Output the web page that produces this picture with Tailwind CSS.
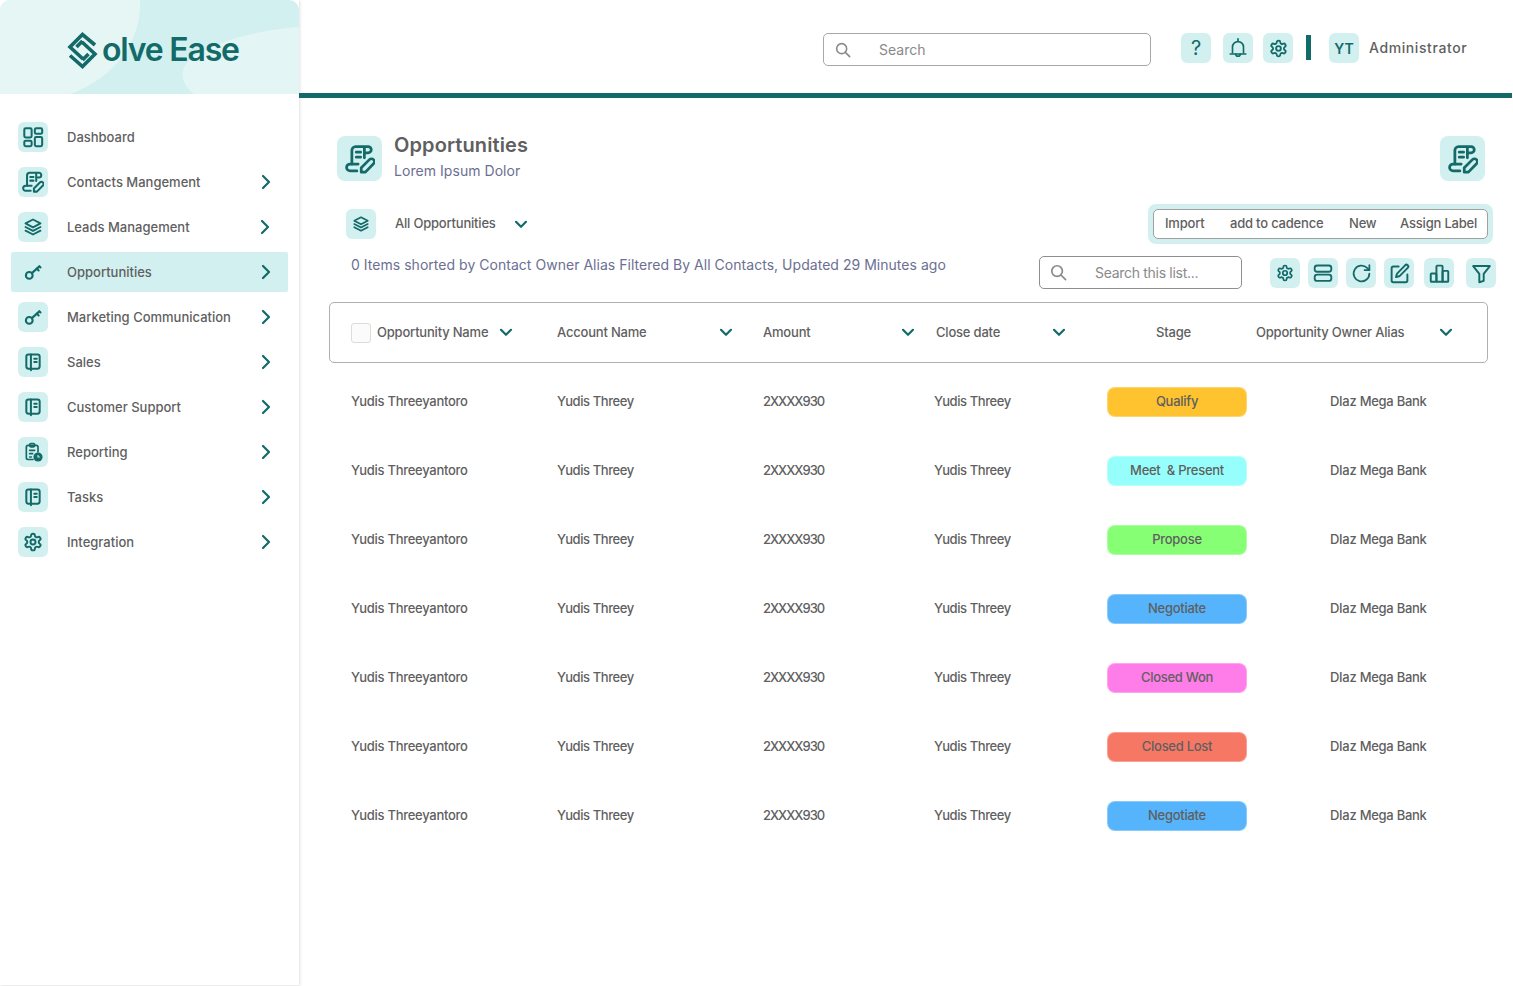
<!doctype html>
<html lang="en">
<head>
<meta charset="utf-8">
<title>Solve Ease - Opportunities</title>
<script src="https://cdn.jsdelivr.net/npm/@tailwindcss/browser@4"></script>
</head>
<body class="bg-white font-['Inter',sans-serif] text-[#5f5f5f] overflow-hidden">
<svg class="hidden" aria-hidden="true">
  <defs>
    <symbol id="i-grid" viewBox="0 0 24 24"><g fill="none" stroke="currentColor" stroke-width="2.200"><rect x="2.500" y="2.500" width="8" height="10" rx="1.500"/><rect x="14" y="2.500" width="8" height="6" rx="1.500"/><rect x="14" y="12" width="8" height="10" rx="1.500"/><rect x="2.500" y="16" width="8" height="6" rx="1.500"/></g></symbol>
    <symbol id="i-scroll" viewBox="0 0 24 24"><g fill="none" stroke="currentColor" stroke-width="2.200" stroke-linecap="round" stroke-linejoin="round"><path d="M5.500 16V5a3 3 0 0 1 3-3h10a2.400 2.400 0 0 1 0 5H16"/><path d="M15.500 3v8"/><path d="M9 6.500h3.500M9 10.500h3.500"/><path d="M9.500 21.500H4a2.700 2.700 0 0 1 0-5.500h6.500"/><path d="M13 22.500v-3.500l6.500-6.500a2.300 2.300 0 0 1 3.300 3.300l-6.500 6.700z"/></g></symbol>
    <symbol id="i-layers" viewBox="0 0 24 24"><g fill="none" stroke="currentColor" stroke-width="2.200" stroke-linejoin="round" stroke-linecap="round"><path d="M12 3l9 4.700-9 4.700-9-4.700z"/><path d="M3 12l9 4.700 9-4.700"/><path d="M3 16.300l9 4.700 9-4.700"/></g></symbol>
    <symbol id="i-key" viewBox="0 0 24 24"><g fill="none" stroke="currentColor" stroke-width="2.800" stroke-linecap="round"><circle cx="7" cy="16.500" r="4.500"/><path d="M10.500 13.500L20.500 4.500"/><path d="M17 7.500l2.500 2.500M20.500 4.500l1.500 1.500"/></g></symbol>
    <symbol id="i-book" viewBox="0 0 24 24"><g fill="none" stroke="currentColor" stroke-width="2.400" stroke-linecap="round" stroke-linejoin="round"><rect x="4" y="3" width="16" height="17" rx="2.500"/><path d="M9.500 3v19"/><path d="M13.500 8h3M13.500 12h3"/></g></symbol>
    <symbol id="i-report" viewBox="0 0 24 24"><g fill="none" stroke="currentColor" stroke-width="2" stroke-linecap="round" stroke-linejoin="round"><path d="M12 21H6a2 2 0 0 1-2-2V6a2 2 0 0 1 2-2h10a2 2 0 0 1 2 2v6"/><rect x="8" y="1.800" width="6" height="4" rx="1.500"/><path d="M8 10h6M8 14h3.500M8 18h2"/></g><circle cx="18" cy="18" r="5.500" fill="currentColor"/><path d="M18 15.500V18h2.200" fill="none" stroke="#d2f0ef" stroke-width="1.300"/></symbol>
    <symbol id="i-gear" viewBox="0 0 24 24"><g fill="none" stroke="currentColor" stroke-width="2.300" stroke-linecap="round" stroke-linejoin="round"><path d="M12.220 2h-.44a2 2 0 0 0-2 2v.18a2 2 0 0 1-1 1.730l-.43.25a2 2 0 0 1-2 0l-.15-.08a2 2 0 0 0-2.730.73l-.22.38a2 2 0 0 0 .73 2.730l.15.1a2 2 0 0 1 1 1.720v.51a2 2 0 0 1-1 1.740l-.15.09a2 2 0 0 0-.73 2.730l.22.38a2 2 0 0 0 2.730.73l.15-.08a2 2 0 0 1 2 0l.43.25a2 2 0 0 1 1 1.730V20a2 2 0 0 0 2 2h.44a2 2 0 0 0 2-2v-.18a2 2 0 0 1 1-1.730l.43-.25a2 2 0 0 1 2 0l.15.08a2 2 0 0 0 2.730-.73l.22-.39a2 2 0 0 0-.73-2.730l-.15-.08a2 2 0 0 1-1-1.740v-.5a2 2 0 0 1 1-1.740l.15-.09a2 2 0 0 0 .73-2.730l-.22-.38a2 2 0 0 0-2.730-.73l-.15.08a2 2 0 0 1-2 0l-.43-.25a2 2 0 0 1-1-1.730V4a2 2 0 0 0-2-2z"/><circle cx="12" cy="12" r="3"/></g></symbol>
    <symbol id="i-bell" viewBox="0 0 24 24"><g fill="none" stroke="currentColor" stroke-width="1.800" stroke-linecap="round" stroke-linejoin="round"><path d="M12 2v2"/><path d="M6 17.500V11a6 6 0 0 1 12 0v6.500"/><path d="M3.500 18.500h17"/><path d="M9.500 18.500a2.500 2.500 0 0 0 5 0"/></g></symbol>
    <symbol id="i-rows" viewBox="0 0 24 24"><g fill="none" stroke="currentColor" stroke-width="2.200"><rect x="2" y="3" width="20" height="7.500" rx="3"/><rect x="2" y="14" width="20" height="7.500" rx="3"/></g></symbol>
    <symbol id="i-refresh" viewBox="0 0 24 24"><g fill="none" stroke="currentColor" stroke-width="2" stroke-linecap="round" stroke-linejoin="round"><path d="M21 12a9 9 0 1 1-2.640-6.360L21 8"/><path d="M21 2.500V8h-5.500"/></g></symbol>
    <symbol id="i-edit" viewBox="0 0 24 24"><g fill="none" stroke="currentColor" stroke-width="2.200" stroke-linecap="round" stroke-linejoin="round"><path d="M11 4H5a2 2 0 0 0-2 2v14a2 2 0 0 0 2 2h14a2 2 0 0 0 2-2v-7"/><path d="M18.375 2.625a2 2 0 0 1 3 3l-9.013 9.014a2 2 0 0 1-.853.505l-3.500 1 1-3.500a2 2 0 0 1 .506-.852z"/></g></symbol>
    <symbol id="i-chart" viewBox="0 0 24 24"><g fill="none" stroke="currentColor" stroke-width="2.200" stroke-linejoin="round"><rect x="2" y="12" width="6.500" height="9.500" rx="1"/><rect x="8.500" y="3" width="7" height="18.500" rx="1"/><rect x="15.500" y="9" width="6.500" height="12.500" rx="1"/></g></symbol>
    <symbol id="i-filter" viewBox="0 0 24 24"><path d="M2.500 3.500h19l-7 9v8l-5 1.500v-9.500z" fill="none" stroke="currentColor" stroke-width="2.200" stroke-linejoin="round"/></symbol>
    <symbol id="i-search" viewBox="0 0 24 24"><g fill="none" stroke="currentColor" stroke-width="2.400" stroke-linecap="round"><circle cx="10" cy="10" r="7.500"/><path d="M15.500 15.500L22 22"/></g></symbol>
    <symbol id="i-right" viewBox="0 0 10 16"><path d="M2 2l6 6-6 6" fill="none" stroke="currentColor" stroke-width="2.200" stroke-linecap="round" stroke-linejoin="round"/></symbol>
    <symbol id="i-down" viewBox="0 0 14 9"><path d="M2 1.800l5 5 5-5" fill="none" stroke="currentColor" stroke-width="2.200" stroke-linecap="round" stroke-linejoin="round"/></symbol>
  </defs>
</svg>

<div class="flex w-[1513px] h-[986px]">
  <!-- Sidebar -->
  <aside class="w-[299px] h-[985px] shrink-0 shadow-[1px_1px_3px_rgba(0,0,0,0.12)] flex flex-col">
    <div class="relative h-[94px] shrink-0 overflow-hidden rounded-t-[10px] bg-[#d2f0ef]">
      <svg class="absolute inset-0 w-[299px] h-[94px]" viewBox="0 0 299 94" aria-hidden="true">
        <path d="M0 0H140C142 40 115 78 70 94H0Z" fill="#e6f6f5"/>
        <path d="M299 27C255 30 215 42 192 58C178 68 180 84 194 94H299Z" fill="#e3f5f4"/>
      </svg>
      <div class="relative flex items-center pl-[67px] pt-[30px] text-[#126a69]">
        <svg class="w-[31px] h-[37px]" viewBox="0 0 31 37" aria-hidden="true">
          <g fill="none" stroke="currentColor" stroke-width="3.600" stroke-linejoin="miter">
            <path d="M28 13L15.500 2.500 3 15l13 12"/>
            <path d="M3 23.500l12.500 11L28 22 15 10"/>
            <path d="M9.500 15l6-6M21.500 22l-6 6"/>
          </g>
        </svg>
        <span class="ml-[4px] text-[32px] leading-[40px] font-semibold tracking-[-1.200px]">olve Ease</span>
      </div>
    </div>
    <nav class="mt-[23px] flex flex-col gap-[5px] text-[13px] font-medium">
      <a class="mx-[11px] h-[40px] flex items-center pl-[7px]"><span class="w-[30px] h-[30px] rounded-md bg-[#d2f0ef] flex items-center justify-center text-[#126a69]"><svg class="w-[22px] h-[22px]"><use href="#i-grid"/></svg></span><span class="ml-[19px] pt-[2px]">Dashboard</span></a>
      <a class="mx-[11px] h-[40px] flex items-center pl-[7px]"><span class="w-[30px] h-[30px] rounded-md bg-[#d2f0ef] flex items-center justify-center text-[#126a69]"><svg class="w-[22px] h-[22px]"><use href="#i-scroll"/></svg></span><span class="ml-[19px] pt-[2px]">Contacts Mangement</span><svg class="ml-auto mr-[17px] w-[10px] h-[16px] text-[#126a69]"><use href="#i-right"/></svg></a>
      <a class="mx-[11px] h-[40px] flex items-center pl-[7px]"><span class="w-[30px] h-[30px] rounded-md bg-[#d2f0ef] flex items-center justify-center text-[#126a69]"><svg class="w-[20px] h-[20px]"><use href="#i-layers"/></svg></span><span class="ml-[19px] pt-[2px]">Leads Management</span><svg class="ml-auto mr-[18px] w-[10px] h-[16px] text-[#126a69]"><use href="#i-right"/></svg></a>
      <a class="mx-[11px] h-[40px] flex items-center pl-[7px] bg-[#d2f0ef] rounded-[2px]"><span class="w-[30px] h-[30px] rounded-md flex items-center justify-center text-[#126a69]"><svg class="w-[18px] h-[18px]"><use href="#i-key"/></svg></span><span class="ml-[19px] pt-[2px]">Opportunities</span><svg class="ml-auto mr-[17px] w-[10px] h-[16px] text-[#126a69]"><use href="#i-right"/></svg></a>
      <a class="mx-[11px] h-[40px] flex items-center pl-[7px]"><span class="w-[30px] h-[30px] rounded-md bg-[#d2f0ef] flex items-center justify-center text-[#126a69]"><svg class="w-[18px] h-[18px]"><use href="#i-key"/></svg></span><span class="ml-[19px] pt-[2px]">Marketing Communication</span><svg class="ml-auto mr-[17px] w-[10px] h-[16px] text-[#126a69]"><use href="#i-right"/></svg></a>
      <a class="mx-[11px] h-[40px] flex items-center pl-[7px]"><span class="w-[30px] h-[30px] rounded-md bg-[#d2f0ef] flex items-center justify-center text-[#126a69]"><svg class="w-[20px] h-[20px]"><use href="#i-book"/></svg></span><span class="ml-[19px] pt-[2px]">Sales</span><svg class="ml-auto mr-[17px] w-[10px] h-[16px] text-[#126a69]"><use href="#i-right"/></svg></a>
      <a class="mx-[11px] h-[40px] flex items-center pl-[7px]"><span class="w-[30px] h-[30px] rounded-md bg-[#d2f0ef] flex items-center justify-center text-[#126a69]"><svg class="w-[20px] h-[20px]"><use href="#i-book"/></svg></span><span class="ml-[19px] pt-[2px]">Customer Support</span><svg class="ml-auto mr-[17px] w-[10px] h-[16px] text-[#126a69]"><use href="#i-right"/></svg></a>
      <a class="mx-[11px] h-[40px] flex items-center pl-[7px]"><span class="w-[30px] h-[30px] rounded-md bg-[#d2f0ef] flex items-center justify-center text-[#126a69]"><svg class="w-[20px] h-[20px]"><use href="#i-report"/></svg></span><span class="ml-[19px] pt-[2px]">Reporting</span><svg class="ml-auto mr-[17px] w-[10px] h-[16px] text-[#126a69]"><use href="#i-right"/></svg></a>
      <a class="mx-[11px] h-[40px] flex items-center pl-[7px]"><span class="w-[30px] h-[30px] rounded-md bg-[#d2f0ef] flex items-center justify-center text-[#126a69]"><svg class="w-[20px] h-[20px]"><use href="#i-book"/></svg></span><span class="ml-[19px] pt-[2px]">Tasks</span><svg class="ml-auto mr-[17px] w-[10px] h-[16px] text-[#126a69]"><use href="#i-right"/></svg></a>
      <a class="mx-[11px] h-[40px] flex items-center pl-[7px]"><span class="w-[30px] h-[30px] rounded-md bg-[#d2f0ef] flex items-center justify-center text-[#126a69]"><svg class="w-[20px] h-[20px]"><use href="#i-gear"/></svg></span><span class="ml-[19px] pt-[2px]">Integration</span><svg class="ml-auto mr-[17px] w-[10px] h-[16px] text-[#126a69]"><use href="#i-right"/></svg></a>
    </nav>
  </aside>

  <!-- Main -->
  <main class="w-[1213px] shrink-0 flex flex-col">
    <header class="h-[93px] shrink-0 flex items-start pt-[33px] pl-[524px]">
      <div class="w-[328px] h-[33px] rounded-[5px] border border-[#a8a8a8] flex items-center pl-[11px] text-[#8a8a8a]">
        <svg class="w-[16px] h-[16px]"><use href="#i-search"/></svg>
        <span class="ml-[28px] text-[14px]">Search</span>
      </div>
      <span class="ml-[30px] w-[30px] h-[30px] rounded-md bg-[#d2f0ef] flex items-center justify-center text-[#126a69] text-[20px] leading-none">?</span>
      <span class="ml-[12px] w-[30px] h-[30px] rounded-md bg-[#d2f0ef] flex items-center justify-center text-[#126a69]"><svg class="w-[22px] h-[24px]"><use href="#i-bell"/></svg></span>
      <span class="ml-[10px] w-[30px] h-[30px] rounded-md bg-[#d2f0ef] flex items-center justify-center text-[#126a69]"><svg class="w-[19px] h-[19px]"><use href="#i-gear"/></svg></span>
      <span class="ml-[13px] mt-[2px] w-[5px] h-[25px] bg-[#126a69]"></span>
      <span class="ml-[18px] w-[30px] h-[30px] rounded-md bg-[#d2f0ef] flex items-center justify-center text-[#126a69] text-[14px] font-semibold">YT</span>
      <span class="ml-[10px] h-[28px] flex items-center text-[14px] font-medium tracking-[0.600px]">Administrator</span>
    </header>
    <div class="h-[5px] shrink-0 bg-[#126a69]"></div>

    <div class="flex items-start justify-between mt-[38px] ml-[38px] mr-[27px]">
      <div class="flex items-start">
        <span class="w-[45px] h-[45px] rounded-lg bg-[#d2f0ef] flex items-center justify-center text-[#126a69]"><svg class="w-[30px] h-[30px]"><use href="#i-scroll"/></svg></span>
        <div class="ml-[12px] -mt-[4px]">
          <h1 class="text-[20px] leading-[26px] font-semibold tracking-[0.100px]">Opportunities</h1>
          <p class="mt-[2px] text-[14px] leading-[22px] text-[#6c6f93] tracking-[0.050px]">Lorem Ipsum Dolor</p>
        </div>
      </div>
      <span class="w-[45px] h-[45px] rounded-lg bg-[#d2f0ef] flex items-center justify-center text-[#126a69]"><svg class="w-[30px] h-[30px]"><use href="#i-scroll"/></svg></span>
    </div>

    <div class="flex items-center justify-between mt-[22px] ml-[47px] mr-[19px] h-[40px]">
      <div class="flex items-center">
        <span class="w-[30px] h-[30px] rounded-md bg-[#d2f0ef] flex items-center justify-center text-[#126a69]"><svg class="w-[18px] h-[18px]"><use href="#i-layers"/></svg></span>
        <span class="ml-[19px] text-[13px] font-medium tracking-[-0.200px]">All Opportunities</span>
        <svg class="ml-[18px] w-[14px] h-[9px] text-[#126a69]"><use href="#i-down"/></svg>
      </div>
      <div class="w-[345px] h-[40px] rounded-lg bg-[#d2f0ef] p-[5px]">
        <div class="h-[30px] rounded-[5px] border border-[#a0a0a0] bg-white flex items-center pl-[11px] text-[13px] font-medium tracking-[-0.200px]">
          <span class="w-[65px]">Import</span>
          <span class="w-[119px]">add to cadence</span>
          <span class="w-[51px]">New</span>
          <span>Assign Label</span>
        </div>
      </div>
    </div>

    <div class="flex items-start mt-[12px] ml-[52px]">
      <p class="w-[688px] text-[14px] leading-[18px] text-[#6c6f93] tracking-[0.030px]">0 Items shorted by Contact Owner Alias Filtered By All Contacts, Updated 29 Minutes ago</p>
      <div class="w-[203px] h-[33px] rounded-[5px] border border-[#8f8f8f] flex items-center pl-[10px] text-[#8a8a8a]">
        <svg class="w-[17px] h-[17px]"><use href="#i-search"/></svg>
        <span class="ml-[28px] text-[14px] tracking-[-0.300px]">Search this list...</span>
      </div>
      <span class="ml-[28px] mt-[2px] w-[30px] h-[30px] rounded-md bg-[#d2f0ef] flex items-center justify-center text-[#126a69]"><svg class="w-[18px] h-[18px]"><use href="#i-gear"/></svg></span>
      <span class="ml-[8px] mt-[2px] w-[30px] h-[30px] rounded-md bg-[#d2f0ef] flex items-center justify-center text-[#126a69]"><svg class="w-[20px] h-[20px]"><use href="#i-rows"/></svg></span>
      <span class="ml-[8px] mt-[2px] w-[30px] h-[30px] rounded-md bg-[#d2f0ef] flex items-center justify-center text-[#126a69]"><svg class="w-[21px] h-[21px]"><use href="#i-refresh"/></svg></span>
      <span class="ml-[8px] mt-[2px] w-[30px] h-[30px] rounded-md bg-[#d2f0ef] flex items-center justify-center text-[#126a69]"><svg class="w-[21px] h-[21px]"><use href="#i-edit"/></svg></span>
      <span class="ml-[10px] mt-[2px] w-[30px] h-[30px] rounded-md bg-[#d2f0ef] flex items-center justify-center text-[#126a69]"><svg class="w-[21px] h-[21px]"><use href="#i-chart"/></svg></span>
      <span class="ml-[12px] mt-[2px] w-[30px] h-[30px] rounded-md bg-[#d2f0ef] flex items-center justify-center text-[#126a69]"><svg class="w-[21px] h-[21px]"><use href="#i-filter"/></svg></span>
    </div>

    <!-- Table -->
    <section class="ml-[30px] mt-[13px] w-[1159px] text-[13px] font-medium">
      <div class="h-[61px] rounded-[5px] border border-[#b0b0b0] pl-[21px] grid grid-cols-[206px_206px_173px_220px_100px_1fr] items-center tracking-[-0.200px]">
        <div class="w-[162px] flex items-center"><span class="w-[20px] h-[20px] rounded-[3px] border border-[#dcdcdc] bg-[#fbfbfb]"></span><span class="ml-[6px]">Opportunity Name</span><svg class="ml-auto w-[14px] h-[9px] text-[#126a69]"><use href="#i-down"/></svg></div>
        <div class="w-[176px] flex items-center"><span>Account Name</span><svg class="ml-auto w-[14px] h-[9px] text-[#126a69]"><use href="#i-down"/></svg></div>
        <div class="w-[152px] flex items-center"><span>Amount</span><svg class="ml-auto w-[14px] h-[9px] text-[#126a69]"><use href="#i-down"/></svg></div>
        <div class="w-[130px] flex items-center"><span>Close date</span><svg class="ml-auto w-[14px] h-[9px] text-[#126a69]"><use href="#i-down"/></svg></div>
        <div>Stage</div>
        <div class="w-[197px] flex items-center"><span>Opportunity Owner Alias</span><svg class="ml-auto w-[14px] h-[9px] text-[#126a69]"><use href="#i-down"/></svg></div>
      </div>
      <div class="mt-[24px] flex flex-col gap-[39px] tracking-[-0.280px]">
        <div class="h-[30px] pl-[22px] grid grid-cols-[206px_206px_171px_173px_223px_1fr] items-center"><span>Yudis Threeyantoro</span><span class="tracking-[-0.400px]">Yudis Threey</span><span class="tracking-[-1px]">2XXXX930</span><span class="tracking-[-0.400px]">Yudis Threey</span><span class="w-[140px] h-[30px] rounded-lg bg-[#fec32f] border border-white/30 flex items-center justify-center">Qualify</span><span>DIaz Mega Bank</span></div>
        <div class="h-[30px] pl-[22px] grid grid-cols-[206px_206px_171px_173px_223px_1fr] items-center"><span>Yudis Threeyantoro</span><span class="tracking-[-0.400px]">Yudis Threey</span><span class="tracking-[-1px]">2XXXX930</span><span class="tracking-[-0.400px]">Yudis Threey</span><span class="w-[140px] h-[30px] rounded-lg bg-[#97fffb] border border-white/30 flex items-center justify-center">Meet &nbsp;&amp; Present</span><span>DIaz Mega Bank</span></div>
        <div class="h-[30px] pl-[22px] grid grid-cols-[206px_206px_171px_173px_223px_1fr] items-center"><span>Yudis Threeyantoro</span><span class="tracking-[-0.400px]">Yudis Threey</span><span class="tracking-[-1px]">2XXXX930</span><span class="tracking-[-0.400px]">Yudis Threey</span><span class="w-[140px] h-[30px] rounded-lg bg-[#86ff74] border border-white/30 flex items-center justify-center">Propose</span><span>DIaz Mega Bank</span></div>
        <div class="h-[30px] pl-[22px] grid grid-cols-[206px_206px_171px_173px_223px_1fr] items-center"><span>Yudis Threeyantoro</span><span class="tracking-[-0.400px]">Yudis Threey</span><span class="tracking-[-1px]">2XXXX930</span><span class="tracking-[-0.400px]">Yudis Threey</span><span class="w-[140px] h-[30px] rounded-lg bg-[#55b4fb] border border-white/30 flex items-center justify-center">Negotiate</span><span>DIaz Mega Bank</span></div>
        <div class="h-[30px] pl-[22px] grid grid-cols-[206px_206px_171px_173px_223px_1fr] items-center"><span>Yudis Threeyantoro</span><span class="tracking-[-0.400px]">Yudis Threey</span><span class="tracking-[-1px]">2XXXX930</span><span class="tracking-[-0.400px]">Yudis Threey</span><span class="w-[140px] h-[30px] rounded-lg bg-[#ff7de9] border border-white/30 flex items-center justify-center">Closed Won</span><span>DIaz Mega Bank</span></div>
        <div class="h-[30px] pl-[22px] grid grid-cols-[206px_206px_171px_173px_223px_1fr] items-center"><span>Yudis Threeyantoro</span><span class="tracking-[-0.400px]">Yudis Threey</span><span class="tracking-[-1px]">2XXXX930</span><span class="tracking-[-0.400px]">Yudis Threey</span><span class="w-[140px] h-[30px] rounded-lg bg-[#f77765] border border-white/30 flex items-center justify-center">Closed Lost</span><span>DIaz Mega Bank</span></div>
        <div class="h-[30px] pl-[22px] grid grid-cols-[206px_206px_171px_173px_223px_1fr] items-center"><span>Yudis Threeyantoro</span><span class="tracking-[-0.400px]">Yudis Threey</span><span class="tracking-[-1px]">2XXXX930</span><span class="tracking-[-0.400px]">Yudis Threey</span><span class="w-[140px] h-[30px] rounded-lg bg-[#55b4fb] border border-white/30 flex items-center justify-center">Negotiate</span><span>DIaz Mega Bank</span></div>
      </div>
    </section>
  </main>
</div>
</body>
</html>
